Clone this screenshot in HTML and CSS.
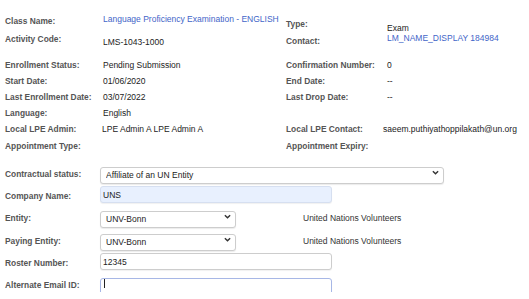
FILE: index.html
```html
<!DOCTYPE html>
<html lang="en">
<head>
    <meta charset="UTF-8">
    <meta name="viewport" content="width=device-width, initial-scale=1.0">
    <title>Enrollment Details</title>
    <link rel="stylesheet" href="styles.css">
</head>
<body>
    <div class="enrollment">
        <div class="top">
            <div class="top-left">
                <div class="label">Class Name:</div>
                <div class="value link up2">Language Proficiency Examination - ENGLISH</div>
                <div class="label">Activity Code:</div>
                <div class="value down3">LMS-1043-1000</div>
            </div>
            <div class="top-right">
                <div class="label">Type:</div>
                <div class="value down4">Exam</div>
                <div class="label">Contact:</div>
                <div class="value link up3">LM_NAME_DISPLAY 184984</div>
            </div>
        </div>

        <div class="details">
            <div class="label">Enrollment Status:</div>
            <div class="value">Pending Submission</div>
            <div class="label">Confirmation Number:</div>
            <div class="value">0</div>

            <div class="label">Start Date:</div>
            <div class="value">01/06/2020</div>
            <div class="label">End Date:</div>
            <div class="value">--</div>

            <div class="label">Last Enrollment Date:</div>
            <div class="value">03/07/2022</div>
            <div class="label">Last Drop Date:</div>
            <div class="value">--</div>

            <div class="label">Language:</div>
            <div class="value">English</div>
            <div></div>
            <div></div>
        </div>

        <div class="lpe">
            <div class="label">Local LPE Admin:</div>
            <div class="value">LPE Admin A LPE Admin A</div>
            <div class="label">Local LPE Contact:</div>
            <div class="value">saeem.puthiyathoppilakath@un.org</div>

            <div class="label">Appointment Type:</div>
            <div class="value"></div>
            <div class="label">Appointment Expiry:</div>
            <div class="value"></div>
        </div>

        <form class="form">
            <div class="form-row">
                <label class="label">Contractual status:</label>
                <div class="select-wrap wide">
                    <select>
                        <option>Affiliate of an UN Entity</option>
                    </select>
                    <svg class="chevron" viewBox="0 0 8 5" width="7" height="5"><path d="M1 1 L4 4 L7 1" fill="none" stroke="#333" stroke-width="1.6"/></svg>
                </div>
            </div>
            <div class="form-row">
                <label class="label">Company Name:</label>
                <input class="text-input autofill" type="text" value="UNS">
            </div>
            <div class="form-row">
                <label class="label">Entity:</label>
                <div class="select-wrap narrow">
                    <select>
                        <option>UNV-Bonn</option>
                    </select>
                    <svg class="chevron" viewBox="0 0 8 5" width="7" height="5"><path d="M1 1 L4 4 L7 1" fill="none" stroke="#333" stroke-width="1.6"/></svg>
                </div>
                <span class="note">United Nations Volunteers</span>
            </div>
            <div class="form-row paying">
                <label class="label">Paying Entity:</label>
                <div class="select-wrap narrow">
                    <select>
                        <option>UNV-Bonn</option>
                    </select>
                    <svg class="chevron" viewBox="0 0 8 5" width="7" height="5"><path d="M1 1 L4 4 L7 1" fill="none" stroke="#333" stroke-width="1.6"/></svg>
                </div>
                <span class="note">United Nations Volunteers</span>
            </div>
            <div class="form-row">
                <label class="label">Roster Number:</label>
                <input class="text-input" type="text" value="12345">
            </div>
            <div class="form-row">
                <label class="label">Alternate Email ID:</label>
                <div class="input-wrap">
                    <input class="text-input focused" type="text" value="">
                    <span class="caret"></span>
                </div>
            </div>
        </form>
    </div>
</body>
</html>
```

FILE: styles.css
```css
body {
    margin: 0;
    background: #fff;
    font-family: "Liberation Sans", Arial, sans-serif;
    color: #222;
}

.enrollment {
    padding: 12px 0 0 5px;
}

.label {
    font-size: 8.4px;
    font-weight: bold;
    color: #555;
    white-space: nowrap;
}

.value {
    font-size: 8.5px;
    color: #222;
    white-space: nowrap;
}

.link {
    color: #3f65c8;
}

/* small vertical nudges, the source page is not perfectly aligned */
.up2 { margin-top: -2px; }
.up3 { margin-top: -3px; }
.down3 { margin-top: 3px; }
.down4 { margin-top: 4px; }

.top {
    display: flex;
    height: 45px;
}

.top-left {
    display: grid;
    grid-template-columns: 98px 183px;
    grid-template-rows: 18px 18px;
    line-height: 18px;
}

.top-right {
    display: grid;
    grid-template-columns: 101px auto;
    grid-template-rows: 17px 17px;
    line-height: 17px;
    padding-top: 4px;
}

.details {
    display: grid;
    grid-template-columns: 98px 183px 101px auto;
    grid-auto-rows: 16px;
    line-height: 16px;
}

.lpe {
    display: grid;
    grid-template-columns: 97px 184px 97px auto;
    grid-auto-rows: 17px;
    line-height: 17px;
}

.form {
    margin-top: 9px;
    display: flex;
    flex-direction: column;
    gap: 5px;
}

.form-row {
    display: flex;
    align-items: center;
    height: 17px;
}

.form-row .label {
    width: 95px;
    padding-top: 2px;
}

.form-row.paying {
    margin-top: 1px;
}

.select-wrap {
    position: relative;
    height: 17px;
}

.select-wrap.wide { width: 344px; }
.select-wrap.narrow { width: 136px; }

.select-wrap select {
    appearance: none;
    -webkit-appearance: none;
    width: 100%;
    height: 17px;
    box-sizing: border-box;
    margin: 0;
    padding: 0 14px 0 5px;
    border: 1px solid #cdcdcd;
    border-radius: 3px;
    background: #fff;
    box-shadow: 0 1px 1px rgba(0, 0, 0, 0.08);
    font-family: inherit;
    font-size: 8.5px;
    color: #222;
}

.chevron {
    position: absolute;
    right: 5px;
    top: 6px;
    pointer-events: none;
}

.note {
    margin-left: 67px;
    font-size: 8.5px;
    color: #333;
    padding-top: 2px;
}

.text-input {
    width: 232px;
    height: 17px;
    box-sizing: border-box;
    margin: 0;
    padding: 0 2px;
    border: 1px solid #cdcdcd;
    border-radius: 3px;
    background: #fff;
    box-shadow: 0 1px 1px rgba(0, 0, 0, 0.06);
    font-family: inherit;
    font-size: 8.5px;
    color: #222;
    outline: none;
}

.text-input.autofill {
    background: #e8f0fe;
    border-color: #d6dff0;
}

.text-input.focused {
    border-color: #a7b7e6;
}

.input-wrap {
    position: relative;
    height: 17px;
}

.caret {
    position: absolute;
    left: 4px;
    top: 4px;
    width: 1px;
    height: 9px;
    background: #222;
}
```
